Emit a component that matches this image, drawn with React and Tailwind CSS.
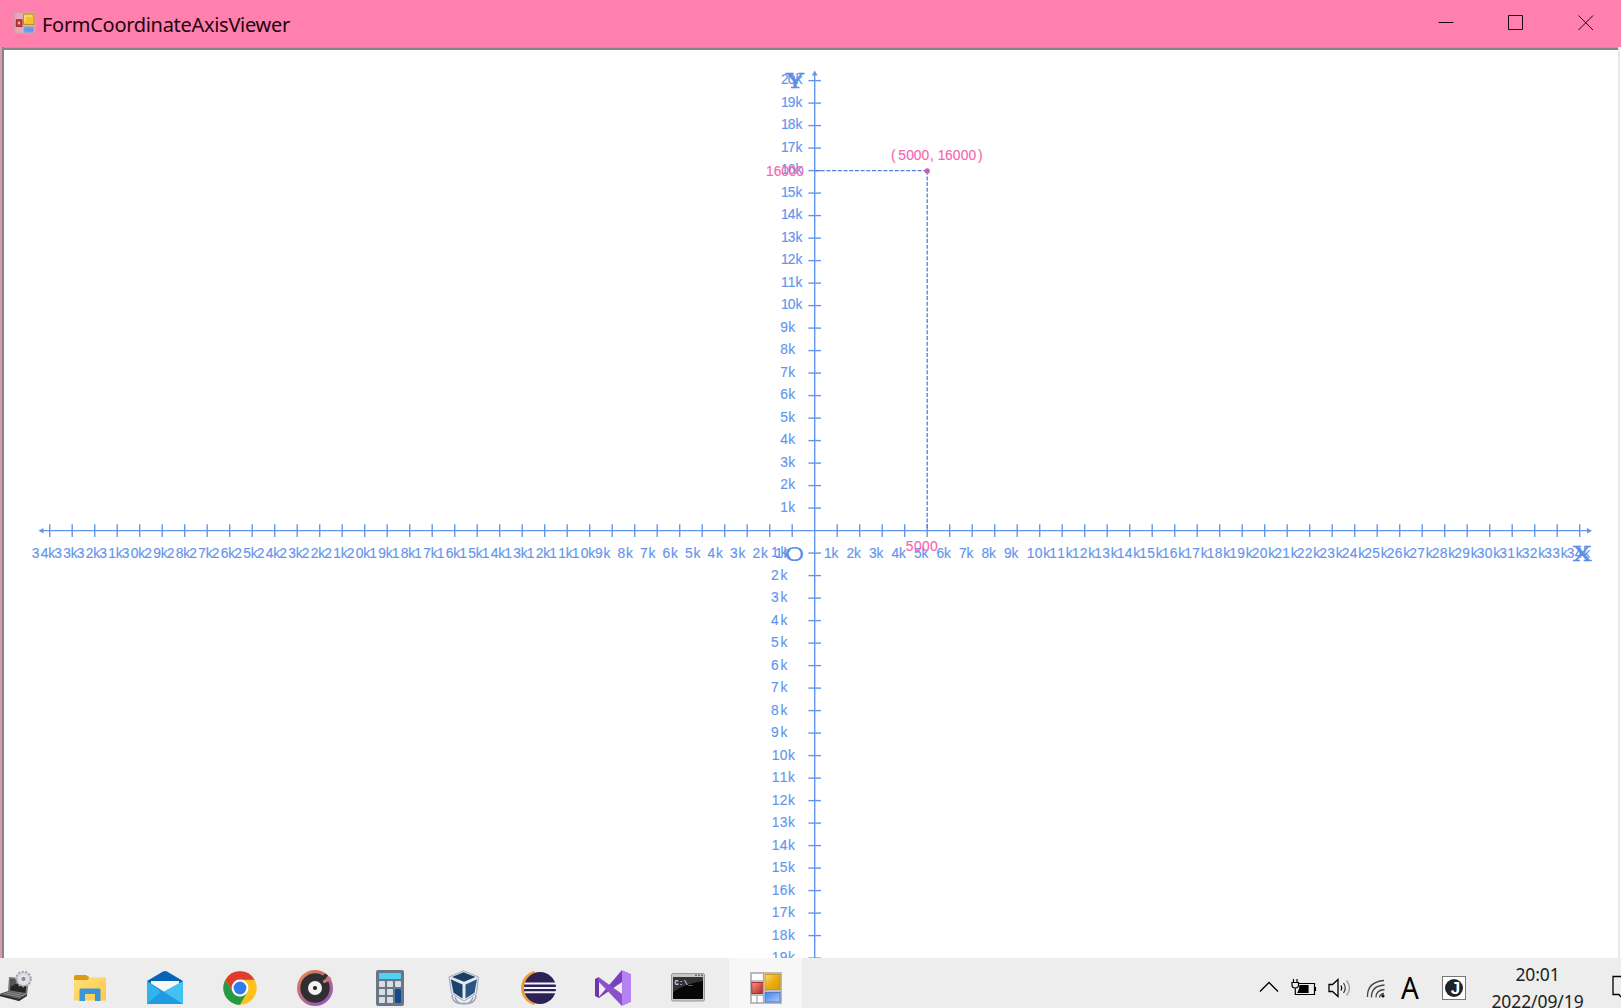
import React from "react";

const OX = 814.7;
const OY = 530.6;
const UNIT = 22.5;
const BLUE = "#6495ed";
const PINK = "#f766b0";

const range = (n) => Array.from({ length: n }, (_, i) => i + 1);

// Label drawn on a fixed grid, one x position for each character.
function Label({ text, xs, y, fill = BLUE }) {
  return (
    <text x={xs.join(" ")} y={y} fill={fill} stroke={fill} strokeWidth=".15" fontSize="13.8" fontFamily="'Liberation Sans', Arial, sans-serif">
      {text}
    </text>
  );
}

function Chart() {
  const two = (s) => s.length === 3;
  return (
    <svg className="block h-[908px] w-[1614px] shrink-0" viewBox="4 50 1614 908">
      <g stroke={BLUE} strokeWidth="1.4">
        <line x1="41" x2="1590" y1={OY} y2={OY} />
        <line x1={OX} x2={OX} y1="73" y2="960" />
        {range(34).flatMap((n) => [
          <line key={"p" + n} x1={OX + n * UNIT} x2={OX + n * UNIT} y1={OY - 6.3} y2={OY + 6.3} />,
          <line key={"m" + n} x1={OX - n * UNIT} x2={OX - n * UNIT} y1={OY - 6.3} y2={OY + 6.3} />,
        ])}
        {range(20).map((n) => (
          <line key={"u" + n} x1={OX - 6.3} x2={OX + 6.3} y1={OY - n * UNIT} y2={OY - n * UNIT} />
        ))}
        {range(19).map((n) => (
          <line key={"d" + n} x1={OX - 6.3} x2={OX + 6.3} y1={OY + n * UNIT} y2={OY + n * UNIT} />
        ))}
      </g>
      <g fill={BLUE}>
        <path d="M814.7 70.5 L817.6 75.5 H811.8 Z" />
        <path d="M38.5 530.7 L43.500 528 V533.400 Z" />
        <path d="M1592 530.7 L1587 528 V533.400 Z" />
      </g>
      {range(34).map((n) => {
        const s = n + "k";
        const p = OX + n * UNIT;
        const m = OX - n * UNIT;
        return (
          <React.Fragment key={n}>
            <Label text={s} y={558.3} xs={two(s) ? [p - 13, p - 5, p + 3.6] : [p - 13.3, p - 5.6]} />
            <Label text={s} y={558.3} xs={two(s) ? [m - 18, m - 9, m - 1.4] : [m - 17.3, m - 8.6]} />
          </React.Fragment>
        );
      })}
      {range(20).map((n) => {
        const s = n + "k";
        return (
          <React.Fragment key={n}>
            <Label text={s} y={OY - n * UNIT + 3.6} xs={two(s) ? [780.9, 787.8, 795.5] : [780.2, 788.2]} />
            {n < 20 && (
              <Label text={s} y={OY + n * UNIT + 3.9} xs={two(s) ? [771.7, 779.8, 788] : [771, 780.4]} />
            )}
          </React.Fragment>
        );
      })}
      <g fill="#5b8de6" stroke="#5b8de6" strokeWidth=".4" fontFamily="'DejaVu Serif', serif" fontSize="20.5">
        <text x="1573" y="561.2" textLength="18.500" lengthAdjust="spacingAndGlyphs">X</text>
        <text x="786" y="88.3" textLength="18" lengthAdjust="spacingAndGlyphs">Y</text>
      </g>
      <text x="785" y="561" fill="#5b8de6" fontFamily="'Liberation Sans', sans-serif" fontSize="20.500" textLength="19" lengthAdjust="spacingAndGlyphs">O</text>
      <g stroke="#4f7fd8" strokeWidth="1.300" strokeDasharray="4 1.700" fill="none">
        <path d="M815 170.7 H927.2" />
        <path d="M927.2 170.7 V530" />
      </g>
      <circle cx="927.2" cy="170.900" r="2.600" fill="#c95cba" />
      <Label text="(5000,16000)" fill={PINK} y={159.5} xs={[891, 898.3, 906.2, 913.8, 921.4, 930, 937.7, 945, 952.7, 960.8, 968.6, 978]} />
      <Label text="16000" fill={PINK} y={176} xs={[766, 773.7, 781.3, 788.8, 796.3]} />
      <Label text="5000" fill={PINK} y={550.8} xs={[905.8, 914, 922, 930]} />
    </svg>
  );
}

function FormIcon({ className }) {
  return (
    <svg className={className} viewBox="0 0 32 32">
      <rect x="1" y="1" width="30" height="30" fill="#fff" stroke="#aaa" strokeWidth="1.6" />
      <path d="M13.500 0V31M0 9H14M14 19H31M0 23H14M7 23V31" stroke="#aaa" strokeWidth="1.3" />
      <rect x="15" y="2.500" width="15" height="15" fill="url(#fy)" stroke="#c8960f" />
      <rect x="1.800" y="10.500" width="10.500" height="11" fill="url(#fr)" stroke="#aa2d26" />
      <rect x="15" y="20.500" width="15" height="9.500" fill="url(#fb)" stroke="#4f7fd0" />
      <defs>
        <linearGradient id="fy" x2="1" y2="1"><stop stopColor="#ffd978" /><stop offset=".5" stopColor="#e9ad12" /><stop offset="1" stopColor="#dd9c00" /></linearGradient>
        <linearGradient id="fr" x2="1" y2="1"><stop stopColor="#f09a90" /><stop offset="1" stopColor="#b82222" /></linearGradient>
        <linearGradient id="fb" x2="1" y2="1"><stop stopColor="#4781ea" /><stop offset="1" stopColor="#a9c8fb" /></linearGradient>
      </defs>
    </svg>
  );
}

// Title bar variant: the frame is faint and the panes sit on the bar's colour.
function TitleIcon() {
  return (
    <svg className="h-[22px] w-[22px]" viewBox="0 0 22 22">
      <rect x=".7" y=".7" width="20.6" height="20.6" fill="#f0a3bd" stroke="#cf9fae" strokeWidth="1.2" />
      <path d="M1 7H9M1 16H9M5 16V21M9 1V21" stroke="#d9b0bd" />
      <rect x="9.5" y="2" width="10.5" height="10.5" fill="#f2c230" stroke="#c18f20" />
      <path d="M11 10V4H18" stroke="#ffeaa0" fill="none" />
      <rect x="2.3" y="7.8" width="5.6" height="6.6" fill="#c9483f" stroke="#9c211f" />
      <rect x="4" y="10" width="2" height="2" fill="#f3b9a8" />
      <rect x="10" y="15" width="9.5" height="5.2" fill="#619be8" stroke="#86a9db" />
    </svg>
  );
}

const I = ({ children }) => <svg className="h-9 w-9" viewBox="0 0 36 36">{children}</svg>;

const Laptop = () => (
  <I>
    <path d="M11 7L31 9L29 25L10 22Z" fill="#777" />
    <path d="M12.5 9L29 10.5L27.5 23L12 20.5Z" fill="#252525" />
    <path d="M12.5 9L25 10L12 17Z" fill="#555" />
    <path d="M10 21L29 25L21 31L1 24Z" fill="#5c5c5c" />
    <path d="M1 24L21 29L29 24.5V26L21 31L1 26Z" fill="#2e2e2e" />
    <path d="M9 22.3L26 25.7M6 23.5L23 27" stroke="#a6a6a6" strokeWidth=".7" />
    <circle cx="25.5" cy="9" r="7.3" fill="#c9c9d1" stroke="#a2a2ad" strokeWidth="2" strokeDasharray="2 1.6" />
    <circle cx="25.5" cy="9" r="6" fill="#dedee4" />
    <circle cx="25.5" cy="9" r="2.8" fill="#8f8f99" stroke="#f8f8fa" />
  </I>
);
const Folder = () => (
  <I>
    <path d="M2 7Q2 5 4 5H14L17 7V11H2Z" fill="#d89c14" />
    <path d="M2 10H15L18 7.5H33Q34 7.5 34 9V30.5H2Z" fill="url(#fo)" />
    <path d="M7.5 31V20Q7.5 18.5 9 18.5H27Q28.5 18.5 28.5 20V31H23V24H13V31Z" fill="#3a94d8" />
    <defs><linearGradient id="fo" x2="1" y2="1"><stop stopColor="#ffe07d" /><stop offset="1" stopColor="#fdc943" /></linearGradient></defs>
  </I>
);
const Mail = () => (
  <I>
    <path d="M0 11L16 1.5Q18 .5 20 1.5L36 11V16H0Z" fill="#0763b5" />
    <path d="M4 11H32V18L18 25L4 17Z" fill="#f7f8fa" />
    <path d="M0 11L36 34H0Z" fill="#24a8ea" />
    <path d="M36 11V34H0L14 23Z" fill="#42c2f3" />
    <path d="M0 11L14 20L36 34H0Z" fill="#1691dc" opacity=".8" />
    <path d="M0 11L14 22L0 34Z" fill="#33b3ee" />
  </I>
);
const Chrome = () => (
  <I>
    <circle cx="18" cy="18" r="16.7" fill="#fcc31e" />
    <path d="M3.5 9.7A16.7 16.7 0 0 1 32.5 9.7H18L10.8 22.2Z" fill="#df3c2d" />
    <path d="M3.5 9.7L10.8 22.2A8.3 8.3 0 0 0 25.2 22.2L18 34.7A16.7 16.7 0 0 1 3.5 9.7Z" fill="#259a45" />
    <circle cx="18" cy="18" r="8.4" fill="#fff" />
    <circle cx="18" cy="18" r="6.4" fill="#2f7be9" />
  </I>
);
const Groove = () => (
  <I>
    <circle cx="18" cy="18" r="18" fill="url(#gr)" />
    <circle cx="18" cy="18" r="14.7" fill="#2f2f31" />
    <path d="M28 3.500L31 5.500L28 9L24 12L22 10Z" fill="#2f2f31" />
    <path d="M26 12.500V10.500L33 6.500L34.500 9.500L28 13Z" fill="#c9767e" />
    <circle cx="18" cy="18" r="7" fill="#f3f3f3" />
    <circle cx="18" cy="18" r="2.1" fill="#222" />
    <defs><linearGradient id="gr" x2=".8" y2="1"><stop stopColor="#ef8a43" /><stop offset=".5" stopColor="#bb6c80" /><stop offset="1" stopColor="#9555c4" /></linearGradient></defs>
  </I>
);
const Calc = () => (
  <I>
    <rect x="4" width="28" height="36" rx="2" fill="#687783" />
    <rect x="7" y="3" width="22" height="6" rx="1" fill="#4fd2f4" />
    {[11, 19, 27].map((y) => [7, 15, 23].map((x) => (
      <rect key={x + "-" + y} x={x} y={y} width="6" height="6" rx=".8" fill="#d9dee6" />
    )))}
    <rect x="23" y="19" width="6" height="14" rx=".8" fill="#134a87" />
  </I>
);
const VBox = () => (
  <I>
    <path d="M7 25Q7 32 14 33.500H24Q31 32 31 25M10 27Q12 34 19 34T28 27" stroke="#9ba6b8" strokeWidth="1.500" fill="none" />
    <path d="M18.500 .8L33.500 7L31.500 23.500L19 31L6.500 23.500L4 7Z" fill="#e2e9f2" stroke="#8b9bb3" strokeWidth=".8" />
    <path d="M18.500 2.200L30.500 7L19 11.800L7 7Z" fill="#1c3e64" />
    <path d="M5.800 9.300L17.500 14.500V28.500L8.500 22.800Z" fill="#1d436b" />
    <path d="M32 9.300L20.500 14.500V28.500L29.500 22.800Z" fill="#2a5583" />
  </I>
);
const Eclipse = () => (
  <I>
    <path d="M14.500 2A16.500 16.500 0 0 0 14.500 34Q4 28 4 18T14.500 2Z" fill="#f7941e" stroke="#f19a36" strokeWidth="2" />
    <circle cx="20" cy="18" r="16" fill="#2c2255" />
    <path d="M4.500 13.500H36M4 18H36M4.500 22.300H36" stroke="#f3f3fa" strokeWidth="1.900" />
  </I>
);
const VS = () => (
  <I>
    <path d="M0 9L4 7V28L0 26Z" fill="#6b35ae" />
    <path d="M3 28L27 0V12L4 28Z" fill="#7940bd" />
    <path d="M3.500 7L27 24V36L3 11Z" fill="#8d50cb" />
    <path d="M27 0L36 4V32L27 36Z" fill="#b681f2" />
  </I>
);
const Cmd = () => (
  <I>
    <rect x="1.500" y="3.500" width="33" height="27.500" rx="1.500" fill="#c8c8c8" stroke="#999" />
    <rect x="3" y="7" width="30" height="22" fill="#070707" />
    <path d="M3 7H33V11Q14 14 3 22Z" fill="#333" />
    <path d="M25 5.200H27M28 5.200H30M31 5.200H33" stroke="#444" />
    <text x="4.500" y="14.500" fontSize="7" fontWeight="bold" fill="#e5e5e5" fontFamily="'Liberation Mono', monospace" textLength="18">C:\_</text>
  </I>
);

const apps = [
  [Laptop, "w-[75px]"],
  [Folder, "w-[74px]"],
  [Mail, "w-[75px]"],
  [Chrome, "w-[75px]"],
  [Groove, "w-[75px]"],
  [Calc, "w-[75px]"],
  [VBox, "w-[71px]"],
  [Eclipse, "w-[79px]"],
  [VS, "w-[71px]"],
  [Cmd, "w-[79px]"],
];

function Tray() {
  return (
    <div className="flex h-[60px] items-start text-black">
      <svg className="mt-[23px] h-[12px] w-[20px]" viewBox="0 0 20 12" fill="none" stroke="currentColor" strokeWidth="1.3"><path d="M1 10.500L10 1.500L19 10.500" /></svg>
      <svg className="ml-[12px] mt-[20px] h-[19px] w-[26px]" viewBox="0 0 26 19" fill="none" stroke="currentColor" strokeWidth="1.2">
        <path d="M7 5.500H23.500V16.500H6M24.500 9V13" /><path d="M9 7.500H17V14.500H7Q9 12 9 7.500Z" fill="currentColor" />
        <path d="M2.500 1V4M6 1V4M1 4.500H7.500V7Q7.500 10 4.300 10Q1 10 1 7ZM4.300 10V16.500H7" />
      </svg>
      <svg className="ml-[11px] mt-[20px] h-[20px] w-[24px]" viewBox="0 0 24 20" fill="none" stroke="currentColor" strokeWidth="1.300">
        <path d="M1 6.500H4.500L10 1.500V18.500L4.500 13.500H1Z" /><path d="M13 7.500Q14.500 10 13 12.500" /><path d="M15.500 5Q19 10 15.500 15" stroke="#444" /><path d="M18.500 2.500Q24.500 10 18.500 17.500" stroke="#999" />
      </svg>
      <svg className="ml-[14px] mt-[21px] h-[20px] w-[20px]" viewBox="0 0 20 20" fill="none" stroke="currentColor" strokeWidth="1.300">
        <path d="M1.500 18Q1 3 18 1.500M5.500 18.500Q5 7 18.500 6M10 18.500Q10 11 18.500 10.500M13.500 18.500Q14 15 18 14.500" stroke="#444" /><circle cx="17" cy="17" r="1.600" fill="#111" stroke="none" />
      </svg>
      <div className="ml-[15px] mt-[11px] flex w-[18px] justify-center font-['Noto_Sans'] text-[31px] leading-[36px]"><span className="scale-x-90">A</span></div>
      <div className="ml-[23px] mt-[18px] flex h-6 w-6 items-center justify-center border border-[#777] bg-white">
        <div className="flex h-[18px] w-[18px] items-center justify-center rounded-full bg-[#20242a] pl-[3px] font-['Liberation_Sans'] text-[17px] font-bold leading-none text-white">J</div>
      </div>
      <div className="ml-[23px] mt-[3px] w-[97px] whitespace-nowrap text-center font-['Noto_Sans'] text-[17.500px] leading-[27px] tracking-[-0.1px] text-[#222]">
        <div>20:01</div>
        <div>2022/09/19</div>
      </div>
      <svg className="ml-[26px] mt-[17px] h-[24px] w-[9px]" viewBox="0 0 9 24" fill="none" stroke="currentColor" strokeWidth="1.300"><path d="M9 1.500H1V19.500H7L9 22" /></svg>
    </div>
  );
}

export default function App() {
  return (
    <div className="flex h-[1008px] w-[1621px] flex-col overflow-hidden bg-white">
      <header className="flex h-[47px] shrink-0 items-center bg-[#ff80ad]">
        <div className="ml-[14px] mb-px"><TitleIcon /></div>
        <h1 className="ml-[6px] mt-[2px] whitespace-nowrap font-['Noto_Sans'] text-[20px] leading-none tracking-[-0.3px] text-[#22050f]">FormCoordinateAxisViewer</h1>
        <div className="mb-px ml-auto mr-[27px] flex gap-[55px] text-[#1c0810]">
          <svg className="h-4 w-4" viewBox="0 0 16 16"><path d="M.5 7.500H15.500" stroke="currentColor" /></svg>
          <svg className="-mx-px h-4 w-4" viewBox="0 0 16 16"><path d="M.5 .5H14.500V14.500H.5Z" stroke="currentColor" fill="none" /></svg>
          <svg className="h-4 w-4" viewBox="0 0 16 16"><path d="M.5 .5L15 15M15 .5L.5 15" stroke="currentColor" /></svg>
        </div>
      </header>
      <main className="flex h-[911px] shrink-0 overflow-hidden">
        <div className="w-[2px] shrink-0 bg-[#d99caf]" />
        <div className="w-[1616px] overflow-hidden border-l-2 border-l-[#858585]">
          <div className="h-px bg-[#c793a4]" />
          <div className="h-[2px] bg-[#858585]" />
          <Chart />
        </div>
        <div className="w-[3px] border-l-2 border-[#e8e8e8] bg-white" />
      </main>
      <footer className="flex h-[50px] shrink-0 items-start overflow-hidden bg-[#ededed]">
        <div className="-ml-[22px] flex">
          {apps.map(([Icon, width], i) => (
            <div key={i} className={"flex h-[50px] justify-center pt-3 " + width}><Icon /></div>
          ))}
          <div className="ml-[2px] flex h-[50px] w-[73px] justify-center bg-[#f7f7f7] pt-[14px]"><FormIcon className="h-8 w-8" /></div>
        </div>
        <div className="ml-auto"><Tray /></div>
      </footer>
    </div>
  );
}
